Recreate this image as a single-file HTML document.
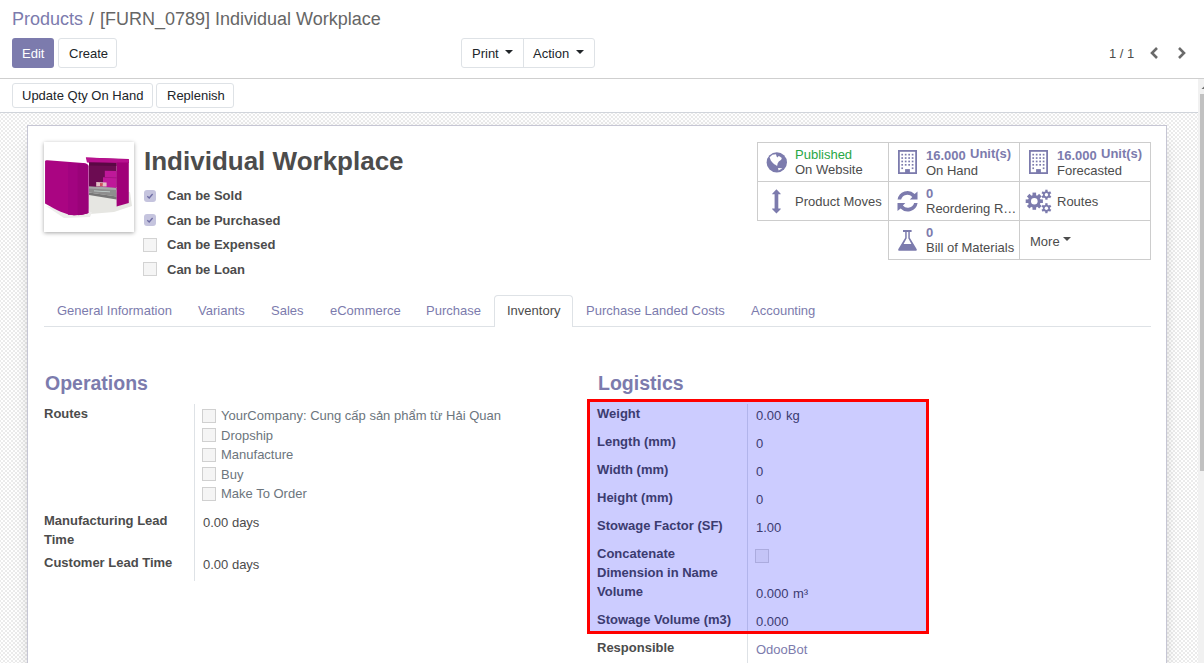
<!DOCTYPE html>
<html><head><meta charset="utf-8">
<style>
*{box-sizing:border-box;margin:0;padding:0}
html,body{width:1204px;height:663px;overflow:hidden;background:#fff;font-family:"Liberation Sans",sans-serif;font-size:13px;color:#4c4c4c;position:relative}
.t{position:absolute;line-height:1;white-space:nowrap}
.b{position:absolute}
.caret{width:0;height:0;border-left:4px solid transparent;border-right:4px solid transparent;border-top:4px solid #212529}
</style></head><body>
<div class="b" style="left:0px;top:0px;width:1204px;height:79px;background:#fff"></div>
<div class="b" style="left:0px;top:78px;width:1204px;height:1px;background:#cfcfcf"></div>
<div class="t" style="left:12px;top:10px;font-size:18px;color:#7C7BAD;">Products</div>
<div class="t" style="left:89px;top:10px;font-size:18px;color:#666;">/</div>
<div class="t" style="left:100px;top:10px;font-size:18px;color:#666;">[FURN_0789] Individual Workplace</div>
<div class="b" style="left:12px;top:38px;width:42px;height:30px;background:#7C7BAD;border-radius:3px"></div>
<div class="t" style="left:22px;top:47px;font-size:13px;color:#fff;">Edit</div>
<div class="b" style="left:58px;top:38px;width:59px;height:30px;border:1px solid #dee2e6;border-radius:3px;background:#fff"></div>
<div class="t" style="left:69px;top:47px;font-size:13px;color:#212529;">Create</div>
<div class="b" style="left:461px;top:38px;width:134px;height:30px;border:1px solid #dee2e6;border-radius:3px;background:#fff"></div>
<div class="b" style="left:523px;top:38px;width:1px;height:30px;background:#dee2e6"></div>
<div class="t" style="left:472px;top:47px;font-size:13px;color:#212529;">Print</div>
<div class="b caret" style="left:505px;top:50px"></div>
<div class="t" style="left:533px;top:47px;font-size:13px;color:#212529;">Action</div>
<div class="b caret" style="left:576px;top:50px"></div>
<div class="t" style="left:1109px;top:47px;font-size:13px;color:#4c4c4c;">1 / 1</div>
<svg class="b" style="left:1148px;top:45px" width="14" height="16" viewBox="0 0 14 16"><path d="M9 3 L4 8 L9 13" fill="none" stroke="#6a6a6a" stroke-width="2.6"/></svg>
<svg class="b" style="left:1175px;top:45px" width="14" height="16" viewBox="0 0 14 16"><path d="M4 3 L9 8 L4 13" fill="none" stroke="#6a6a6a" stroke-width="2.6"/></svg>
<div class="b" style="left:0px;top:79px;width:1198px;height:34px;background:#fff"></div>
<div class="b" style="left:0px;top:112px;width:1198px;height:1px;background:#d0d4da"></div>
<div class="b" style="left:12px;top:83px;width:141px;height:25px;border:1px solid #dee2e6;border-radius:3px;background:#fff"></div>
<div class="t" style="left:22px;top:89px;font-size:13px;color:#212529;">Update Qty On Hand</div>
<div class="b" style="left:156px;top:83px;width:78px;height:25px;border:1px solid #dee2e6;border-radius:3px;background:#fff"></div>
<div class="t" style="left:167px;top:89px;font-size:13px;color:#212529;">Replenish</div>
<div class="b" style="left:0px;top:113px;width:1198px;height:550px;background-color:#fff;background-image:repeating-conic-gradient(#ebebeb 0% 25%, #ffffff 0% 50%);background-size:4px 4px;background-position:3px 1px"></div>
<div class="b" style="left:1198px;top:79px;width:6px;height:584px;background:#f1f1f1"></div>
<div class="b" style="left:1200px;top:94px;width:4px;height:377px;background:#c1c1c1"></div>
<svg class="b" style="left:1198px;top:79px" width="6" height="15" viewBox="0 0 6 15"><path d="M6 7.5 L3.5 10 L6 10 Z" fill="#6e6e6e"/></svg>
<div class="b" style="left:27px;top:125px;width:1140px;height:560px;background:#fff;border:1px solid #c6c6d4;box-shadow:0 5px 20px -15px #000"></div>
<div class="b" style="left:44px;top:142px;width:90px;height:90px;background:#fff;box-shadow:0 1px 4px rgba(0,0,0,.35)"></div>
<svg class="b" style="left:44px;top:142px" width="90" height="90" viewBox="0 0 90 90">
<path d="M40 52 L86 50 L88 64 L70 70 L46 72 Z" fill="#e6e6e2"/>
<path d="M2 64 L20 76 L46 75 L48 70 L20 68 Z" fill="#ededeb"/>
<path d="M41.8 15.6 L84.8 17 L84.8 21 L45 21 Z" fill="#a00078"/>
<path d="M41.8 15.6 L84.8 17.5 L84.8 21 L43 20.6 Z" fill="#b8128f"/>
<path d="M45 20.6 L72.6 21 L72.6 45 L45 45 Z" fill="#6c0c52"/>
<path d="M45 20.6 L72.6 21 L72.6 24 L45 23.5 Z" fill="#5a0844"/>
<path d="M60.8 28.8 L72.6 29 L72.6 47.3 L59 47.3 L59 35 L60.8 35 Z" fill="#bf1899"/>
<path d="M59 35 L72.6 35.5 L72.6 36.3 L59 35.8 Z" fill="#a0107e"/>
<path d="M45 44.6 L72.6 46 L72.6 54.5 L45 50.5 Z" fill="#8e8e8e"/>
<path d="M45 44.6 L62 45.2 L72.6 46 L72.6 48 L45 46.5 Z" fill="#a8a8a8"/>
<path d="M52.2 40 L62.6 40.6 L62.6 44.6 L52.2 44.6 Z" fill="#e2c2c4"/>
<path d="M56 41 L59 41.2 L58.5 44 L56 44 Z" fill="#d05060"/>
<path d="M45 50.5 L72.6 54.5 L72.6 57.5 L45 53 Z" fill="#777"/><path d="M50 48.5 L66 49.5 L66 50.3 L50 49.3 Z" fill="#c8d6d4"/>
<path d="M72.6 20.6 L84.8 20.6 L84.8 61 L72.6 64.5 Z" fill="#a00078"/>
<path d="M1.05 19.5 C1.05 18.5 2 18.3 3.5 18.3 L39 21 C42.5 21.3 44.3 22.5 44.3 24.5 L44.3 71 C40 72.5 35 73.2 30 73.2 C22 73.2 12 68 1.05 61.6 Z" fill="#aa0582"/>
<path d="M24 21 L39 21 C42.5 21.3 44.3 22.5 44.3 24.5 L44.3 71 C40 72.5 35 73.2 30 73.2 L24 72.8 Z" fill="#a20380"/>
<path d="M33.7 22 L44.3 23 L44.3 71 C40 72.5 37 73 33.7 73.2 Z" fill="#9a0279"/>
</svg>
<div class="t" style="left:144px;top:148px;font-size:26px;font-weight:bold;color:#4c4c4c;">Individual Workplace</div>
<div class="b" style="left:144px;top:190px;width:12px;height:12px;border-radius:3px;background:#c5c4de"></div>
<svg class="b" style="left:144px;top:190px" width="12" height="12" viewBox="0 0 12 12"><path d="M3.3 6.2 L5.2 8 L8.6 4" fill="none" stroke="#6d6ca3" stroke-width="1.3"/></svg>
<div class="b" style="left:144px;top:214px;width:12px;height:12px;border-radius:3px;background:#c5c4de"></div>
<svg class="b" style="left:144px;top:214px" width="12" height="12" viewBox="0 0 12 12"><path d="M3.3 6.2 L5.2 8 L8.6 4" fill="none" stroke="#6d6ca3" stroke-width="1.3"/></svg>
<div class="b" style="left:143px;top:238px;width:14px;height:14px;border:1px solid #d3d3d3;background:#f5f5f5"></div>
<div class="b" style="left:143px;top:262px;width:14px;height:14px;border:1px solid #d3d3d3;background:#f5f5f5"></div>
<div class="t" style="left:167px;top:189px;font-size:13px;font-weight:bold;color:#4c4c4c;">Can be Sold</div>
<div class="t" style="left:167px;top:214px;font-size:13px;font-weight:bold;color:#4c4c4c;">Can be Purchased</div>
<div class="t" style="left:167px;top:238px;font-size:13px;font-weight:bold;color:#4c4c4c;">Can be Expensed</div>
<div class="t" style="left:167px;top:263px;font-size:13px;font-weight:bold;color:#4c4c4c;">Can be Loan</div>
<div class="b" style="left:757px;top:142px;width:132px;height:40px;border:1px solid #cdcdcd;background:#fff"></div>
<div class="b" style="left:888px;top:142px;width:132px;height:40px;border:1px solid #cdcdcd;background:#fff"></div>
<div class="b" style="left:1019px;top:142px;width:132px;height:40px;border:1px solid #cdcdcd;background:#fff"></div>
<div class="b" style="left:757px;top:181px;width:132px;height:40px;border:1px solid #cdcdcd;background:#fff"></div>
<div class="b" style="left:888px;top:181px;width:132px;height:40px;border:1px solid #cdcdcd;background:#fff"></div>
<div class="b" style="left:1019px;top:181px;width:132px;height:40px;border:1px solid #cdcdcd;background:#fff"></div>
<div class="b" style="left:888px;top:220px;width:132px;height:40px;border:1px solid #cdcdcd;background:#fff"></div>
<div class="b" style="left:1019px;top:220px;width:132px;height:40px;border:1px solid #cdcdcd;background:#fff"></div>
<div class="t" style="left:795px;top:148px;font-size:13px;color:#28a745;">Published</div>
<div class="t" style="left:795px;top:163px;font-size:13px;color:#4c4c4c;">On Website</div>
<div class="t" style="left:795px;top:195px;font-size:13px;color:#4c4c4c;">Product Moves</div>
<div class="t" style="left:926px;top:149px;font-size:13px;font-weight:bold;color:#7C7BAD;">16.000</div>
<div class="t" style="left:970px;top:147px;font-size:13px;font-weight:bold;color:#7C7BAD;">Unit(s)</div>
<div class="t" style="left:926px;top:164px;font-size:13px;color:#4c4c4c;">On Hand</div>
<div class="t" style="left:1057px;top:149px;font-size:13px;font-weight:bold;color:#7C7BAD;">16.000</div>
<div class="t" style="left:1101px;top:147px;font-size:13px;font-weight:bold;color:#7C7BAD;">Unit(s)</div>
<div class="t" style="left:1057px;top:164px;font-size:13px;color:#4c4c4c;">Forecasted</div>
<div class="t" style="left:926px;top:187px;font-size:13px;font-weight:bold;color:#7C7BAD;">0</div>
<div class="t" style="left:926px;top:202px;font-size:13px;color:#4c4c4c;">Reordering R…</div>
<div class="t" style="left:1057px;top:195px;font-size:13px;color:#4c4c4c;">Routes</div>
<div class="t" style="left:926px;top:226px;font-size:13px;font-weight:bold;color:#7C7BAD;">0</div>
<div class="t" style="left:926px;top:241px;font-size:13px;color:#4c4c4c;">Bill of Materials</div>
<div class="t" style="left:1030px;top:235px;font-size:13px;color:#4c4c4c;">More</div>
<div class="b caret" style="left:1063px;top:237px;border-top-color:#4c4c4c"></div>
<svg class="b" style="left:762px;top:148px" width="30" height="30" viewBox="0 0 30 30">
<circle cx="14.8" cy="14.4" r="10.2" fill="#7C7BAD"/>
<path d="M7.6 9.2 L10.4 6.8 L14 6.2 L14.6 8.4 L15.6 9.4 L16.2 8.2 L17.4 8.3 L19.8 10 L19.2 11.8 L16.8 13.5 L15.6 15.6 L15.2 17.8 L14.2 17.4 L13.4 16.8 L12.2 16.2 L10.2 14.2 L8.8 12.6 L8.2 10.8 Z" fill="#fff"/>
<path d="M16 20 L20.4 20.3 L16.6 22.6 Z" fill="#fff"/>
</svg>
<svg class="b" style="left:768px;top:189px" width="16" height="25" viewBox="0 0 16 25">
<path d="M8.45 0.2 L12.9 4.9 L12.6 5.3 L10.3 5.3 L10.3 19.5 L12.6 19.5 L12.9 19.9 L8.45 24.4 L4 19.9 L4.3 19.5 L6.6 19.5 L6.6 5.3 L4.3 5.3 L4 4.9 Z" fill="#7C7BAD"/>
</svg>
<svg class="b" style="left:898px;top:150px" width="19" height="24" viewBox="0 0 19 24">
<rect x="0.9" y="0.9" width="17.2" height="22.2" fill="none" stroke="#7C7BAD" stroke-width="1.8"/>
<rect x="3.35" y="3.80" width="1.7" height="1.7" fill="#7C7BAD"/><rect x="3.35" y="7.20" width="1.7" height="1.7" fill="#7C7BAD"/><rect x="3.35" y="10.60" width="1.7" height="1.7" fill="#7C7BAD"/><rect x="3.35" y="14.00" width="1.7" height="1.7" fill="#7C7BAD"/><rect x="6.82" y="3.80" width="1.7" height="1.7" fill="#7C7BAD"/><rect x="6.82" y="7.20" width="1.7" height="1.7" fill="#7C7BAD"/><rect x="6.82" y="10.60" width="1.7" height="1.7" fill="#7C7BAD"/><rect x="6.82" y="14.00" width="1.7" height="1.7" fill="#7C7BAD"/><rect x="10.29" y="3.80" width="1.7" height="1.7" fill="#7C7BAD"/><rect x="10.29" y="7.20" width="1.7" height="1.7" fill="#7C7BAD"/><rect x="10.29" y="10.60" width="1.7" height="1.7" fill="#7C7BAD"/><rect x="10.29" y="14.00" width="1.7" height="1.7" fill="#7C7BAD"/><rect x="13.76" y="3.80" width="1.7" height="1.7" fill="#7C7BAD"/><rect x="13.76" y="7.20" width="1.7" height="1.7" fill="#7C7BAD"/><rect x="13.76" y="10.60" width="1.7" height="1.7" fill="#7C7BAD"/><rect x="13.76" y="14.00" width="1.7" height="1.7" fill="#7C7BAD"/><rect x="3.35" y="17.4" width="1.7" height="1.7" fill="#7C7BAD"/><rect x="13.76" y="17.4" width="1.7" height="1.7" fill="#7C7BAD"/><rect x="7.1" y="19.1" width="4.8" height="4" fill="#7C7BAD"/></svg>
<svg class="b" style="left:1029px;top:150px" width="19" height="24" viewBox="0 0 19 24">
<rect x="0.9" y="0.9" width="17.2" height="22.2" fill="none" stroke="#7C7BAD" stroke-width="1.8"/>
<rect x="3.35" y="3.80" width="1.7" height="1.7" fill="#7C7BAD"/><rect x="3.35" y="7.20" width="1.7" height="1.7" fill="#7C7BAD"/><rect x="3.35" y="10.60" width="1.7" height="1.7" fill="#7C7BAD"/><rect x="3.35" y="14.00" width="1.7" height="1.7" fill="#7C7BAD"/><rect x="6.82" y="3.80" width="1.7" height="1.7" fill="#7C7BAD"/><rect x="6.82" y="7.20" width="1.7" height="1.7" fill="#7C7BAD"/><rect x="6.82" y="10.60" width="1.7" height="1.7" fill="#7C7BAD"/><rect x="6.82" y="14.00" width="1.7" height="1.7" fill="#7C7BAD"/><rect x="10.29" y="3.80" width="1.7" height="1.7" fill="#7C7BAD"/><rect x="10.29" y="7.20" width="1.7" height="1.7" fill="#7C7BAD"/><rect x="10.29" y="10.60" width="1.7" height="1.7" fill="#7C7BAD"/><rect x="10.29" y="14.00" width="1.7" height="1.7" fill="#7C7BAD"/><rect x="13.76" y="3.80" width="1.7" height="1.7" fill="#7C7BAD"/><rect x="13.76" y="7.20" width="1.7" height="1.7" fill="#7C7BAD"/><rect x="13.76" y="10.60" width="1.7" height="1.7" fill="#7C7BAD"/><rect x="13.76" y="14.00" width="1.7" height="1.7" fill="#7C7BAD"/><rect x="3.35" y="17.4" width="1.7" height="1.7" fill="#7C7BAD"/><rect x="13.76" y="17.4" width="1.7" height="1.7" fill="#7C7BAD"/><rect x="7.1" y="19.1" width="4.8" height="4" fill="#7C7BAD"/></svg>
<svg class="b" style="left:894px;top:186px" width="28" height="30" viewBox="0 0 28 30">
<path d="M3.6 13.6 A10 10 0 0 1 20.6 8.1 L23.5 5.6 L23.5 13.6 L15.8 13.6 L18.3 11.1 A6.5 6.5 0 0 0 7.1 13.6 Z" fill="#7C7BAD"/>
<path d="M23.6 17 A10 10 0 0 1 6.6 22.4 L3.5 25 L3.5 17 L11.3 17 L8.9 19.5 A6.5 6.5 0 0 0 20.1 17 Z" fill="#7C7BAD"/>
</svg>
<svg class="b" style="left:1025px;top:189px" width="28" height="26" viewBox="0 0 28 26">
<rect x="7.500000000000001" y="3.5999999999999996" width="3.6" height="8.6" fill="#7C7BAD" transform="rotate(0.0 9.3 12.2)"/><rect x="7.500000000000001" y="3.5999999999999996" width="3.6" height="8.6" fill="#7C7BAD" transform="rotate(45.0 9.3 12.2)"/><rect x="7.500000000000001" y="3.5999999999999996" width="3.6" height="8.6" fill="#7C7BAD" transform="rotate(90.0 9.3 12.2)"/><rect x="7.500000000000001" y="3.5999999999999996" width="3.6" height="8.6" fill="#7C7BAD" transform="rotate(135.0 9.3 12.2)"/><rect x="7.500000000000001" y="3.5999999999999996" width="3.6" height="8.6" fill="#7C7BAD" transform="rotate(180.0 9.3 12.2)"/><rect x="7.500000000000001" y="3.5999999999999996" width="3.6" height="8.6" fill="#7C7BAD" transform="rotate(225.0 9.3 12.2)"/><rect x="7.500000000000001" y="3.5999999999999996" width="3.6" height="8.6" fill="#7C7BAD" transform="rotate(270.0 9.3 12.2)"/><rect x="7.500000000000001" y="3.5999999999999996" width="3.6" height="8.6" fill="#7C7BAD" transform="rotate(315.0 9.3 12.2)"/><circle cx="9.3" cy="12.2" r="6.3" fill="#7C7BAD"/><circle cx="9.3" cy="12.2" r="3.3" fill="#fff"/><rect x="20.25" y="0.7000000000000002" width="2.3" height="5.0" fill="#7C7BAD" transform="rotate(0.0 21.4 5.7)"/><rect x="20.25" y="0.7000000000000002" width="2.3" height="5.0" fill="#7C7BAD" transform="rotate(60.0 21.4 5.7)"/><rect x="20.25" y="0.7000000000000002" width="2.3" height="5.0" fill="#7C7BAD" transform="rotate(120.0 21.4 5.7)"/><rect x="20.25" y="0.7000000000000002" width="2.3" height="5.0" fill="#7C7BAD" transform="rotate(180.0 21.4 5.7)"/><rect x="20.25" y="0.7000000000000002" width="2.3" height="5.0" fill="#7C7BAD" transform="rotate(240.0 21.4 5.7)"/><rect x="20.25" y="0.7000000000000002" width="2.3" height="5.0" fill="#7C7BAD" transform="rotate(300.0 21.4 5.7)"/><circle cx="21.4" cy="5.7" r="3.5" fill="#7C7BAD"/><circle cx="21.4" cy="5.7" r="1.7" fill="#fff"/><rect x="20.25" y="14.2" width="2.3" height="5.0" fill="#7C7BAD" transform="rotate(0.0 21.4 19.2)"/><rect x="20.25" y="14.2" width="2.3" height="5.0" fill="#7C7BAD" transform="rotate(60.0 21.4 19.2)"/><rect x="20.25" y="14.2" width="2.3" height="5.0" fill="#7C7BAD" transform="rotate(120.0 21.4 19.2)"/><rect x="20.25" y="14.2" width="2.3" height="5.0" fill="#7C7BAD" transform="rotate(180.0 21.4 19.2)"/><rect x="20.25" y="14.2" width="2.3" height="5.0" fill="#7C7BAD" transform="rotate(240.0 21.4 19.2)"/><rect x="20.25" y="14.2" width="2.3" height="5.0" fill="#7C7BAD" transform="rotate(300.0 21.4 19.2)"/><circle cx="21.4" cy="19.2" r="3.5" fill="#7C7BAD"/><circle cx="21.4" cy="19.2" r="1.7" fill="#fff"/>
</svg>
<svg class="b" style="left:897px;top:229px" width="21" height="23" viewBox="0 0 21 23">
<path d="M6 1 L14.6 1 L14.6 3 L12.8 3 L12.8 8.8 L19.6 20 C20.2 21 19.6 21.8 18.6 21.8 L2.4 21.8 C1.4 21.8 0.8 21 1.4 20 L8.2 8.8 L8.2 3 L6 3 Z" fill="#7C7BAD"/>
<path d="M9.7 3 L11.3 3 L11.3 9.2 L14.4 14.9 L6.6 14.9 L9.7 9.2 Z" fill="#fff"/>
</svg>
<div class="b" style="left:44px;top:326px;width:1107px;height:1px;background:#dee2e6"></div>
<div class="b" style="left:494px;top:295px;width:79px;height:32px;border:1px solid #dee2e6;border-bottom:none;border-radius:4px 4px 0 0;background:#fff"></div>
<div class="t" style="left:57px;top:304px;font-size:13px;color:#7C7BAD;">General Information</div>
<div class="t" style="left:198px;top:304px;font-size:13px;color:#7C7BAD;">Variants</div>
<div class="t" style="left:271px;top:304px;font-size:13px;color:#7C7BAD;">Sales</div>
<div class="t" style="left:330px;top:304px;font-size:13px;color:#7C7BAD;">eCommerce</div>
<div class="t" style="left:426px;top:304px;font-size:13px;color:#7C7BAD;">Purchase</div>
<div class="t" style="left:586px;top:304px;font-size:13px;color:#7C7BAD;">Purchase Landed Costs</div>
<div class="t" style="left:751px;top:304px;font-size:13px;color:#7C7BAD;">Accounting</div>
<div class="t" style="left:507px;top:304px;font-size:13px;color:#4c4c4c;">Inventory</div>
<div class="t" style="left:45px;top:374px;font-size:19.5px;font-weight:bold;color:#7C7BAD;">Operations</div>
<div class="b" style="left:194px;top:404px;width:1px;height:177px;background:#dee2e6"></div>
<div class="t" style="left:44px;top:407px;font-size:13px;font-weight:bold;color:#4c4c4c;">Routes</div>
<div class="b" style="left:202px;top:409px;width:14px;height:14px;border:1px solid #d0d0d0;background:#f5f5f5"></div>
<div class="t" style="left:221px;top:409px;font-size:13px;color:#6c757d;">YourCompany: Cung cấp sản phẩm từ Hải Quan</div>
<div class="b" style="left:202px;top:428px;width:14px;height:14px;border:1px solid #d0d0d0;background:#f5f5f5"></div>
<div class="t" style="left:221px;top:429px;font-size:13px;color:#6c757d;">Dropship</div>
<div class="b" style="left:202px;top:448px;width:14px;height:14px;border:1px solid #d0d0d0;background:#f5f5f5"></div>
<div class="t" style="left:221px;top:448px;font-size:13px;color:#6c757d;">Manufacture</div>
<div class="b" style="left:202px;top:467px;width:14px;height:14px;border:1px solid #d0d0d0;background:#f5f5f5"></div>
<div class="t" style="left:221px;top:468px;font-size:13px;color:#6c757d;">Buy</div>
<div class="b" style="left:202px;top:487px;width:14px;height:14px;border:1px solid #d0d0d0;background:#f5f5f5"></div>
<div class="t" style="left:221px;top:487px;font-size:13px;color:#6c757d;">Make To Order</div>
<div class="t" style="left:44px;top:514px;font-size:13px;font-weight:bold;color:#4c4c4c;">Manufacturing Lead</div>
<div class="t" style="left:44px;top:533px;font-size:13px;font-weight:bold;color:#4c4c4c;">Time</div>
<div class="t" style="left:44px;top:556px;font-size:13px;font-weight:bold;color:#4c4c4c;">Customer Lead Time</div>
<div class="t" style="left:203px;top:516px;font-size:13px;color:#4c4c4c;">0.00 days</div>
<div class="t" style="left:203px;top:558px;font-size:13px;color:#4c4c4c;">0.00 days</div>
<div class="t" style="left:598px;top:374px;font-size:19.5px;font-weight:bold;color:#7C7BAD;">Logistics</div>
<div class="b" style="left:747px;top:404px;width:1px;height:270px;background:#dee2e6"></div>
<div class="t" style="left:597px;top:407px;font-size:13px;font-weight:bold;color:#4c4c4c;">Weight</div>
<div class="t" style="left:756px;top:409px;font-size:13px;color:#4c4c4c;">0.00</div>
<div class="t" style="left:597px;top:435px;font-size:13px;font-weight:bold;color:#4c4c4c;">Length (mm)</div>
<div class="t" style="left:756px;top:437px;font-size:13px;color:#4c4c4c;">0</div>
<div class="t" style="left:597px;top:463px;font-size:13px;font-weight:bold;color:#4c4c4c;">Width (mm)</div>
<div class="t" style="left:756px;top:465px;font-size:13px;color:#4c4c4c;">0</div>
<div class="t" style="left:597px;top:491px;font-size:13px;font-weight:bold;color:#4c4c4c;">Height (mm)</div>
<div class="t" style="left:756px;top:493px;font-size:13px;color:#4c4c4c;">0</div>
<div class="t" style="left:597px;top:519px;font-size:13px;font-weight:bold;color:#4c4c4c;">Stowage Factor (SF)</div>
<div class="t" style="left:756px;top:521px;font-size:13px;color:#4c4c4c;">1.00</div>
<div class="t" style="left:597px;top:547px;font-size:13px;font-weight:bold;color:#4c4c4c;">Concatenate</div>
<div class="t" style="left:597px;top:566px;font-size:13px;font-weight:bold;color:#4c4c4c;">Dimension in Name</div>
<div class="b" style="left:755px;top:549px;width:14px;height:14px;border:1px solid #d6d6d6;background:#f5f5f5"></div>
<div class="t" style="left:597px;top:585px;font-size:13px;font-weight:bold;color:#4c4c4c;">Volume</div>
<div class="t" style="left:756px;top:587px;font-size:13px;color:#4c4c4c;">0.000</div>
<div class="t" style="left:793px;top:587px;font-size:13px;color:#4c4c4c;">m³</div>
<div class="t" style="left:786px;top:409px;font-size:13px;color:#4c4c4c;">kg</div>
<div class="t" style="left:597px;top:613px;font-size:13px;font-weight:bold;color:#4c4c4c;">Stowage Volume (m3)</div>
<div class="t" style="left:756px;top:615px;font-size:13px;color:#4c4c4c;">0.000</div>
<div class="t" style="left:597px;top:641px;font-size:13px;font-weight:bold;color:#4c4c4c;">Responsible</div>
<div class="t" style="left:756px;top:643px;font-size:13px;color:#7C7BAD;">OdooBot</div>
<div class="b" style="left:587px;top:399px;width:342px;height:235px;border:3px solid #ff0000;background:rgba(0,0,255,0.2)"></div>
</body></html>
